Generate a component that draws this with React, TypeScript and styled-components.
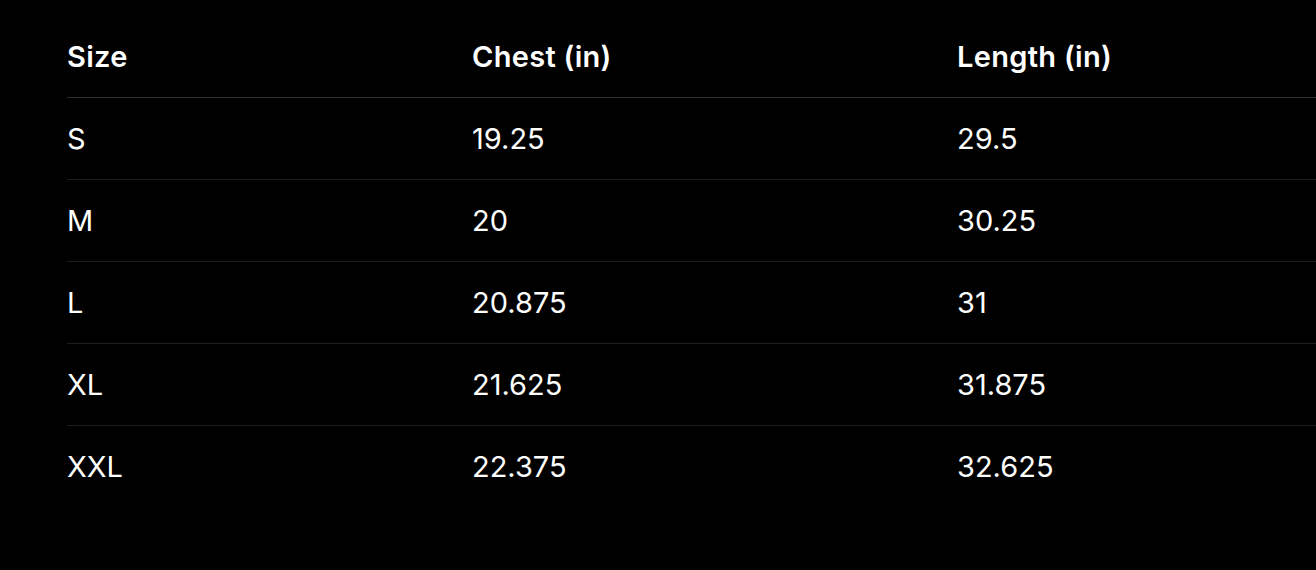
import React, { FC } from 'react'
import styled, { createGlobalStyle } from 'styled-components'

const GlobalStyle = createGlobalStyle`
    html, body {
        margin: 0;
        padding: 0;
        background: #000;
    }
    body {
        font-family: Inter, "Noto Sans", "Liberation Sans", sans-serif;
        color: #fff;
        -webkit-font-smoothing: antialiased;
    }
`

const StyledPage = styled.div`
    width: 1316px;
    height: 570px;
    padding: 16px 0 0 67px;
    box-sizing: border-box;
    background: #000;
    overflow: hidden;
`

const StyledTable = styled.div`
    display: flex;
    flex-direction: column;
    width: 100%;
`

const StyledRow = styled.div<{ $head?: boolean; $last?: boolean }>`
    display: grid;
    grid-template-columns: 405px 485px 1fr;
    align-items: center;
    height: 82px;
    box-sizing: border-box;
    border-bottom: 1px solid ${props => props.$last ? 'transparent' : props.$head ? '#2e2e30' : '#1e1e20'};
`

const StyledCell = styled.div<{ $head?: boolean }>`
    font-size: 29px;
    font-weight: ${props => props.$head ? 600 : 400};
    letter-spacing: ${props => props.$head ? '0.3px' : '0'};
    color: #fff;
    white-space: nowrap;
`

interface ISizeRow {
    size: string
    chest: string
    length: string
}

const rows: ISizeRow[] = [
    { size: 'S', chest: '19.25', length: '29.5' },
    { size: 'M', chest: '20', length: '30.25' },
    { size: 'L', chest: '20.875', length: '31' },
    { size: 'XL', chest: '21.625', length: '31.875' },
    { size: 'XXL', chest: '22.375', length: '32.625' },
]

const App: FC = () => {
    return (
        <StyledPage>
            <GlobalStyle />
            <StyledTable>
                <StyledRow $head>
                    <StyledCell $head>Size</StyledCell>
                    <StyledCell $head>Chest (in)</StyledCell>
                    <StyledCell $head>Length (in)</StyledCell>
                </StyledRow>
                {rows.map((row, i) => (
                    <StyledRow key={row.size} $last={i === rows.length - 1}>
                        <StyledCell>{row.size}</StyledCell>
                        <StyledCell>{row.chest}</StyledCell>
                        <StyledCell>{row.length}</StyledCell>
                    </StyledRow>
                ))}
            </StyledTable>
        </StyledPage>
    )
}

export default App
